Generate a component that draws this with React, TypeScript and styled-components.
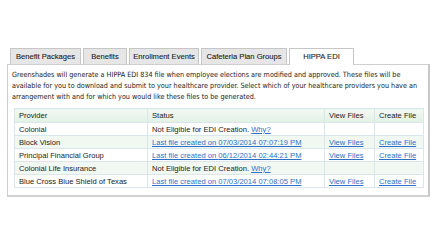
import React from "react";
import styled, { createGlobalStyle } from "styled-components";

const Global = createGlobalStyle`
  html, body { margin: 0; padding: 0; background: #fff; }
  body { font-family: "Liberation Sans", Arial, sans-serif; }
`;

const Page = styled.div`
  padding: 48px 0 0 7px;
  width: 423px;
`;

const TabBar = styled.div`
  display: flex;
  gap: 2px;
  padding-left: 3px;
  position: relative;
  z-index: 1;
`;

const Tab = styled.div<{ $active?: boolean; $w: number }>`
  box-sizing: border-box;
  width: ${(p) => p.$w}px;
  height: ${(p) => (p.$active ? "17px" : "16px")};
  margin-bottom: ${(p) => (p.$active ? "-1px" : "0")};
  display: flex;
  align-items: center;
  justify-content: center;
  padding-bottom: 1px;
  font-family: "Liberation Sans", Arial, sans-serif;
  font-size: 7.6px;
  color: #1a1a1a;
  -webkit-text-stroke: 0.1px #1a1a1a;
  border: 1px solid #c6c6c6;
  border-bottom: none;
  background: ${(p) => (p.$active ? "#fff" : "#e6e6e6")};
`;

const Panel = styled.div`
  border: 1px solid #cfcfcf;
  border-right: 2px solid #c8c8c8;
  border-bottom: 2px solid #d2d2d2;
  padding: 4px 5px 7px 4px;
`;

const Intro = styled.p`
  margin: 0 0 6px 0;
  font-family: "DejaVu Sans Condensed", "DejaVu Sans", sans-serif;
  font-size: 7.2px;
  line-height: 11px;
  color: #222;
  white-space: nowrap;
`;

const Table = styled.table`
  border-collapse: collapse;
  margin-left: 2px;
  width: 410px;
  font-family: "Liberation Sans", Arial, sans-serif;
  font-size: 7.6px;
  color: #222;
`;

const HeadCell = styled.th<{ $w?: number }>`
  text-align: left;
  font-weight: normal;
  height: 13px;
  padding: 0 4px;
  border: 1px solid #d9e6ec;
  background: linear-gradient(#f2f9f3, #e2f1e5);
  width: ${(p) => (p.$w ? `${p.$w}px` : "auto")};
`;

const Row = styled.tr<{ $alt?: boolean }>`
  background: ${(p) => (p.$alt ? "#f0f8f1" : "#fff")};
`;

const Cell = styled.td`
  height: 12px;
  padding: 0 4px;
  border: 1px solid #d9e6ec;
  white-space: nowrap;
`;

const Link = styled.a`
  color: #2f6fc8;
  text-decoration: underline;
  cursor: pointer;
`;

const tabs = [
  { label: "Benefit Packages", w: 71 },
  { label: "Benefits", w: 44 },
  { label: "Enrollment Events", w: 70 },
  { label: "Cafeteria Plan Groups", w: 86 },
  { label: "HIPPA EDI", w: 65, active: true },
];

type R = { provider: string; status?: string; eligible: boolean };
const rows: R[] = [
  { provider: "Colonial", eligible: false },
  { provider: "Block Vision", eligible: true, status: "07/03/2014 07:07:19 PM" },
  { provider: "Principal Financial Group", eligible: true, status: "06/12/2014 02:44:21 PM" },
  { provider: "Colonial Life Insurance", eligible: false },
  { provider: "Blue Cross Blue Shield of Texas", eligible: true, status: "07/03/2014 07:08:05 PM" },
];

export default function App() {
  return (
    <>
      <Global />
      <Page>
        <TabBar>
          {tabs.map((t) => (
            <Tab key={t.label} $active={t.active} $w={t.w}>
              {t.label}
            </Tab>
          ))}
        </TabBar>
        <Panel>
          <Intro>
            Greenshades will generate a HIPPA EDI 834 file when employee elections are modified and approved. These files will be
            <br />
            available for you to download and submit to your healthcare provider. Select which of your healthcare providers you have an
            <br />
            arrangement with and for which you would like these files to be generated.
          </Intro>
          <Table>
            <thead>
              <tr>
                <HeadCell $w={124}>Provider</HeadCell>
                <HeadCell $w={168}>Status</HeadCell>
                <HeadCell $w={41}>View Files</HeadCell>
                <HeadCell>Create File</HeadCell>
              </tr>
            </thead>
            <tbody>
              {rows.map((r, i) => (
                <Row key={r.provider} $alt={i % 2 === 1}>
                  <Cell>{r.provider}</Cell>
                  <Cell>
                    {r.eligible ? (
                      <Link>Last file created on {r.status}</Link>
                    ) : (
                      <>
                        Not Eligible for EDI Creation. <Link>Why?</Link>
                      </>
                    )}
                  </Cell>
                  <Cell>{r.eligible && <Link>View Files</Link>}</Cell>
                  <Cell>{r.eligible && <Link>Create File</Link>}</Cell>
                </Row>
              ))}
            </tbody>
          </Table>
        </Panel>
      </Page>
    </>
  );
}
